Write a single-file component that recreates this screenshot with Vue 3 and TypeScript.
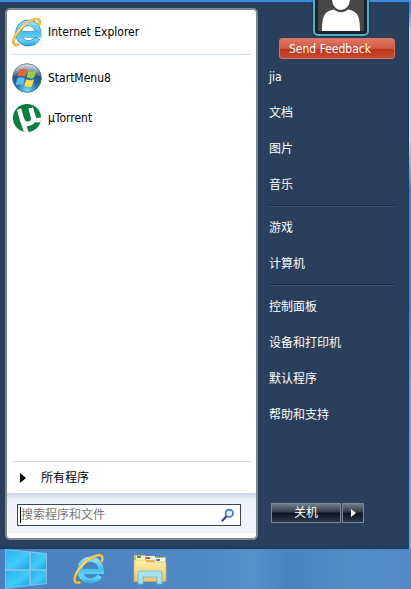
<script setup lang="ts">
import { ref } from 'vue'

interface Program {
  id: string
  label: string
}

const pinned: Program[] = [{ id: 'ie', label: 'Internet Explorer' }]
const recent: Program[] = [
  { id: 'startmenu', label: 'StartMenu8' },
  { id: 'utorrent', label: 'µTorrent' },
]
const places: string[][] = [
  ['jia', '文档', '图片', '音乐'],
  ['游戏', '计算机'],
  ['控制面板', '设备和打印机', '默认程序', '帮助和支持'],
]
const query = ref('')
</script>

<template>
  <svg class="defs" width="0" height="0" aria-hidden="true">
    <defs>
      <linearGradient id="ieBlue" gradientUnits="userSpaceOnUse" x1="0" y1="4" x2="0" y2="31">
        <stop offset="0" stop-color="#a2e4fa" />
        <stop offset=".45" stop-color="#4abdee" />
        <stop offset=".75" stop-color="#6bd6f8" />
        <stop offset="1" stop-color="#2a9cdb" />
      </linearGradient>
      <linearGradient id="gold" gradientUnits="userSpaceOnUse" x1="0" y1="30" x2="30" y2="0">
        <stop offset="0" stop-color="#f0bb2c" />
        <stop offset=".5" stop-color="#ffe67c" />
        <stop offset="1" stop-color="#f0c03a" />
      </linearGradient>
      <radialGradient id="orb" cx=".5" cy=".95" r=".9">
        <stop offset="0" stop-color="#74ddf4" />
        <stop offset=".4" stop-color="#287aa8" />
        <stop offset=".75" stop-color="#294b77" />
        <stop offset="1" stop-color="#8297b2" />
      </radialGradient>
      <linearGradient id="gloss" x1="0" y1="0" x2="0" y2="1">
        <stop offset="0" stop-color="#fff" stop-opacity=".65" />
        <stop offset="1" stop-color="#fff" stop-opacity=".08" />
      </linearGradient>
      <linearGradient id="folder" x1="0" y1="0" x2="0" y2="1">
        <stop offset="0" stop-color="#fff0ad" />
        <stop offset="1" stop-color="#e9c763" />
      </linearGradient>
      <linearGradient id="pane" x1="0" y1="0" x2="1" y2="1">
        <stop offset="0" stop-color="#25b5ee" />
        <stop offset=".55" stop-color="#42cbf8" />
        <stop offset="1" stop-color="#1aa8e4" />
      </linearGradient>
      <clipPath id="disc"><circle cx="16" cy="16" r="15" /></clipPath>
      <symbol id="ieIcon" viewBox="0 0 32 32">
        <g fill="none">
          <path stroke="#2380bd" stroke-width="6.600" d="M8 18.500H28C28.200 11 23.800 6.300 17.500 6.300S6.800 11 6.800 17.300 11.500 28 17.500 28c4.400 0 7.600-2 9.500-5.700" />
          <path stroke="url(#ieBlue)" stroke-width="5.400" d="M8 18.500H28.300C28.200 11 23.800 6.300 17.500 6.300S6.800 11 6.800 17.300 11.500 28 17.500 28c4.400 0 7.400-1.800 9.200-5.200" />
          <path stroke="#c08f25" stroke-width="2.800" stroke-linecap="round" d="M6.500 29.500C-1.500 31.500 1 21 9.500 12 17.500 3.500 28.500-.8 29.500 4.500c.2 1.300-.1 2.500-.6 3.700" />
          <path stroke="url(#gold)" stroke-width="2.200" stroke-linecap="round" d="M6.500 29.500C-1.500 31.500 1 21 9.500 12 17.500 3.500 28.500-.8 29.500 4.500c.2 1.300-.1 2.500-.6 3.700" />
        </g>
      </symbol>
    </defs>
  </svg>

  <div class="desktop">
    <main class="menu">
      <section class="left">
        <nav class="programs" aria-label="Programs">
          <div class="pinned">
            <button v-for="p in pinned" :key="p.id" class="program" type="button">
              <svg class="icon" viewBox="0 0 32 32"><use href="#ieIcon" /></svg>
              <span>{{ p.label }}</span>
            </button>
          </div>
          <button v-for="p in recent" :key="p.id" class="program" type="button">
            <svg v-if="p.id === 'startmenu'" class="icon" viewBox="0 0 32 32">
              <circle cx="16" cy="16" r="15.300" fill="url(#orb)" stroke="#49617f" stroke-width=".8" />
              <path fill="url(#gloss)" d="M1.500 15C2 6 8.500 1.200 16 1.200S30 6 30.500 15c-7-3-20-3.500-29 0Z" />
              <g transform="translate(16 16) scale(1.200) translate(-16 -16)">
                <path fill="#f0642a" d="M9.500 8.600c2.400-1.300 4.500-1.200 6.500.1l-1.600 6.200c-2-1.300-4.200-1.300-6.500-.2Z" />
                <path fill="#9bcb45" d="M17.300 9.300c2.300 1.300 4.500 1.200 7-.1l-1.800 6.300c-2.300 1.200-4.600 1.200-6.800-.1Z" />
                <path fill="#62bdf4" d="M7.500 16.200c2.300-1.200 4.500-1.100 6.500.2l-1.600 6.200c-2-1.300-4.200-1.300-6.500-.2Z" />
                <path fill="#ffd850" d="M15.300 17c2.200 1.300 4.500 1.200 6.900.1l-1.700 6.200c-2.300 1.200-4.700 1.200-6.900-.1Z" />
              </g>
            </svg>
            <svg v-else class="icon" viewBox="0 0 32 32">
              <circle cx="16" cy="16" r="15" fill="#0a8040" />
              <g clip-path="url(#disc)" fill="none" stroke="#fff" stroke-width="4.800">
                <path d="M7.500 6.500 10.500 17c1.500 4.500 4.500 5.800 7.800 5 3.700-.9 5-3.400 4.200-7L20 5.500" />
                <path d="M20 5.500 23 15c1 3.500 3.500 4.200 9 2.500" />
                <path d="M10.500 17 15.500 32" />
              </g>
            </svg>
            <span>{{ p.label }}</span>
          </button>
        </nav>
        <button class="all" type="button">
          <svg width="6" height="12" viewBox="0 0 6 12"><path d="M0 1l6 5-6 5Z" fill="#000" /></svg>
          <span>所有程序</span>
        </button>
        <form class="search" @submit.prevent>
          <div class="field">
            <input v-model="query" type="text" aria-label="搜索程序和文件" placeholder="搜索程序和文件" />
            <button type="submit" aria-label="搜索">
              <svg width="14" height="14" viewBox="0 0 14 14">
                <path d="M1.500 12.500 5.500 8.300" stroke="#27478f" stroke-width="2.200" stroke-linecap="round" />
                <circle cx="8.300" cy="5.300" r="3.700" fill="#dff4ff" stroke="#3c73c6" stroke-width="1.700" />
              </svg>
            </button>
          </div>
        </form>
      </section>

      <aside class="right">
        <div class="avatar">
          <svg viewBox="0 0 46 46" width="46" height="46">
            <rect width="46" height="46" fill="#474747" />
            <ellipse cx="23" cy="14" rx="9" ry="11" fill="#fff" />
            <path fill="#fff" d="M4 46c0-10 1-15 4-18 2-2 5-3 8-3.500 4 3.500 10 3.500 14 0 3 .5 6 1.500 8 3.500 3 3 4 8 4 18Z" />
          </svg>
        </div>
        <button class="feedback" type="button">Send Feedback</button>
        <nav class="places" aria-label="Places">
          <ul v-for="(group, i) in places" :key="i">
            <li v-for="name in group" :key="name"><a href="#">{{ name }}</a></li>
          </ul>
        </nav>
        <div class="power">
          <button class="shutdown" type="button">关机</button>
          <button class="more" type="button" aria-label="更多">
            <svg width="5" height="8" viewBox="0 0 5 8"><path d="M0 0l5 4-5 4Z" fill="#fff" /></svg>
          </button>
        </div>
      </aside>
    </main>

    <footer class="taskbar">
      <button type="button" aria-label="Start">
        <svg width="42" height="40" viewBox="0 0 42 40">
          <path fill="#86bde8" d="M0 0 42 4v31L0 40Z" />
          <path fill="url(#pane)" d="M1 1l23 2.500V20H1Z" />
          <path fill="url(#pane)" d="M26 4l15 1.500V20H26Z" />
          <path fill="url(#pane)" d="M1 22h23v14.500L1 39Z" />
          <path fill="url(#pane)" d="M26 22h15v12l-15 2Z" />
        </svg>
      </button>
      <button type="button" aria-label="Internet Explorer">
        <svg width="32" height="32" viewBox="0 0 32 32"><use href="#ieIcon" /></svg>
      </button>
      <button type="button" aria-label="File Explorer">
        <svg width="36" height="32" viewBox="-2 0 36 32">
          <path fill="#dcb954" d="M1 5V2h11l2 2h19v24H1Z" />
          <path fill="#fff8dc" d="M3 3h9v4H3zM13 3h9v4h-9zM22 5h10v4H22z" />
          <path fill="#3a9b46" d="M4 3h4v2H4z" />
          <path fill="#d9492f" d="M13 4h4v2h-4z" />
          <path fill="#3a8bd0" d="M23 6h4v2h-4z" />
          <path fill="url(#folder)" stroke="#d8b452" stroke-width=".6" d="M1 7h11l2 2h19v19.500H1Z" />
          <path fill="#a8e0f2" stroke="#60b6d8" stroke-width=".8" d="M5 31V20q0-2 2-2h20q2 0 2 2v11h-5v-7H10v7Z" />
        </svg>
      </button>
    </footer>
  </div>
</template>

<style>
body {
  margin: 0;
}
</style>

<style scoped>
* {
  box-sizing: border-box;
}
.defs {
  position: absolute;
}
button {
  margin: 0;
  padding: 0;
  border: 0;
  background: none;
  color: inherit;
  font: inherit;
}
svg {
  display: block;
  flex: none;
}
.desktop {
  display: flex;
  flex-direction: column;
  min-height: 100vh;
  padding-top: 2px;
  overflow: hidden;
  background: linear-gradient(#388de9 0, #388de9 10px, #bdd9e8 30px, #c4dce0 140px, #3a87dc 190px, #3a87dc 300px, #5ba6e0 400px, #6cabe0);
  font: 12px/16px "DejaVu Sans Condensed", "Noto Sans CJK SC", sans-serif;
  color: #000;
}
.menu {
  flex: 1;
  display: grid;
  grid-template-columns: 253px 1fr;
  margin-right: 2px;
  padding: 6px 0 7px 5px;
  border-right: 1px solid #153f6b;
  border-bottom: 2px solid #1b3c63;
  background: #293f5c;
}
.left {
  display: flex;
  flex-direction: column;
  border: 2px solid #7d8893;
  border-radius: 5px;
  background: #fff;
}
.programs {
  flex: 1;
  padding: 2px 5px 0;
}
.pinned {
  margin-bottom: 3px;
  padding-bottom: 2px;
  border-bottom: 1px solid #d5e3ec;
}
.program {
  display: flex;
  align-items: center;
  gap: 6px;
  width: 100%;
  height: 40px;
  text-align: left;
}
.icon {
  width: 30px;
  height: 30px;
}
.all {
  display: flex;
  align-items: center;
  gap: 15px;
  height: 32px;
  margin: 0 5px;
  padding-left: 8px;
  border-top: 1px solid #d5dde3;
}
.search {
  margin-bottom: 5px;
  padding: 11px 15px 7px 10px;
  background: linear-gradient(#c6d4e3 0, #edf2fa 6px, #f2f5fb);
}
.field {
  display: flex;
  align-items: center;
  height: 22px;
  padding: 0 5px 0 2px;
  border: 1px solid #3c4650;
  background: #fff;
}
.field input {
  flex: 1;
  min-width: 0;
  height: 16px;
  padding: 0;
  border: 0;
  border-left: 1px solid #000;
  outline: 0;
  background: none;
  font: inherit;
}
.field input::placeholder {
  color: #777;
  opacity: 1;
}
.right {
  display: flex;
  flex-direction: column;
  padding: 0 13px 17px 11px;
  color: #fff;
}
.avatar {
  align-self: center;
  margin: -28px 0 2px 18px;
  padding: 3px;
  border: 2px solid #57acc0;
  border-radius: 5px;
  background: #17242f;
  box-shadow: 0 0 2px #0e2236;
}
.feedback {
  height: 21px;
  margin-left: 10px;
  padding-left: 9px;
  border: 1px solid #d07869;
  border-radius: 3px;
  background: linear-gradient(#df7865, #d1563f 50%, #bd3217 51%, #c74a30);
  text-align: left;
}
.places {
  flex: 1;
}
ul {
  margin: 0;
  padding: 0;
  list-style: none;
}
ul + ul {
  margin-top: 2px;
  padding-top: 4px;
  border-top: 1px solid #182d46;
  box-shadow: inset 0 1px #3d536d;
}
li {
  height: 36px;
}
a {
  display: block;
  color: #fff;
  line-height: 36px;
  text-decoration: none;
}
.power {
  display: flex;
  gap: 1px;
  margin-left: 2px;
}
.power button {
  display: grid;
  place-items: center;
  height: 20px;
  border: 1px solid #7b8896;
  background: linear-gradient(#737d8a, #303b48 45%, #0d1620 50%, #29394b);
}
.power .shutdown {
  width: 70px;
}
.power .more {
  width: 22px;
}
.taskbar {
  display: flex;
  align-items: center;
  gap: 26px;
  height: 40px;
  padding-left: 5px;
  overflow: hidden;
  background: linear-gradient(90deg, #4c7fc0, #5089c6 50%, #5292cb 62%, #4585c1 70%, #538dc8 85%, #5489c9);
}
</style>
